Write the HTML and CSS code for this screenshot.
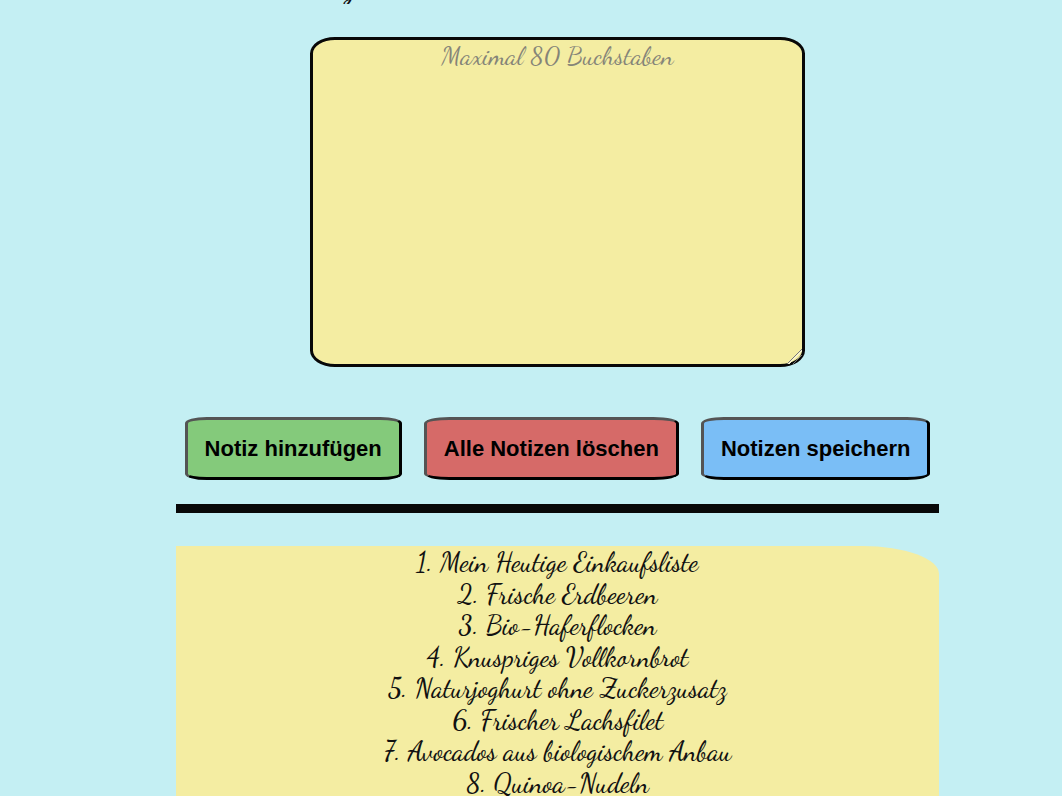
FILE: index.html
```html
<!DOCTYPE html>
<html lang="de">
<head>
<meta charset="utf-8">
<meta name="viewport" content="width=device-width, initial-scale=1">
<title>Notizen</title>
<link rel="stylesheet" href="styles.css">
</head>
<body>
<main class="page">
  <p class="intro">g</p>
  <textarea class="note-input" maxlength="80" placeholder="Maximal 80 Buchstaben" aria-label="Notiz"></textarea>
  <div class="actions">
    <button class="btn btn-add" type="button">Notiz hinzufügen</button>
    <button class="btn btn-clear" type="button">Alle Notizen löschen</button>
    <button class="btn btn-save" type="button">Notizen speichern</button>
  </div>
  <hr class="divider">
  <ol class="notes">
    <li>Mein Heutige Einkaufsliste</li>
    <li>Frische Erdbeeren</li>
    <li>Bio-Haferflocken</li>
    <li>Knuspriges Vollkornbrot</li>
    <li>Naturjoghurt ohne Zuckerzusatz</li>
    <li>Frischer Lachsfilet</li>
    <li>Avocados aus biologischem Anbau</li>
    <li>Quinoa-Nudeln</li>
  </ol>
</main>
</body>
</html>
```
FILE: styles.css
```css
* {
  box-sizing: border-box;
}

body {
  margin: 0;
  height: 100vh;
  overflow: hidden;
  background: #c4eff3;
  color: #111;
}

.page {
  display: flex;
  flex-direction: column;
  padding: 0 123px 0 176px;
}

.intro,
.note-input,
.notes {
  font-family: "Dancing Script", "Liberation Serif", serif;
}

/* Only the descender of the line above the input remains in view. */
.intro {
  display: flex;
  align-items: flex-end;
  height: 4px;
  margin: 0 0 33px;
  padding-left: 168px;
  overflow: hidden;
  font-size: 32px;
  font-weight: 700;
  line-height: 34px;
}

.note-input {
  align-self: center;
  width: 65%;
  height: 330px;
  padding: 0 3px;
  border: 3px solid #080808;
  border-radius: 5%;
  background: #f4eda2;
  font-size: 26px;
  line-height: 31px;
  text-align: center;
  resize: both;
}

.note-input::placeholder {
  color: #858478;
  opacity: 1;
}

.note-input::-webkit-resizer {
  background: linear-gradient(135deg, transparent 48%, #777 48%, #777 53%, #f8f4cf 53%, #f8f4cf 58%, transparent 58%, transparent 68%, #777 68%, #777 73%, transparent 73%);
}

.actions {
  display: flex;
  justify-content: center;
  gap: 22px;
  margin-top: 50px;
}

.btn {
  padding: 16px 17px;
  border: 3px outset #000;
  border-radius: 10%;
  color: #000;
  font: bold 22px/25px "Liberation Sans", Arial, sans-serif;
  white-space: nowrap;
}

.btn-add {
  background: #84ca7b;
}

.btn-clear {
  background: #d66a68;
}

.btn-save {
  background: #7abef6;
}

.divider {
  width: 100%;
  height: 9px;
  margin: 24px 0 33px;
  border: 0;
  background: #080808;
}

.notes {
  margin: 0;
  padding: 1px 0 8px;
  border-top-right-radius: 76px 28px;
  background: #f4eda2;
  font-size: 27px;
  font-weight: 500;
  line-height: 1.17;
  list-style-position: inside;
  text-align: center;
}
```
